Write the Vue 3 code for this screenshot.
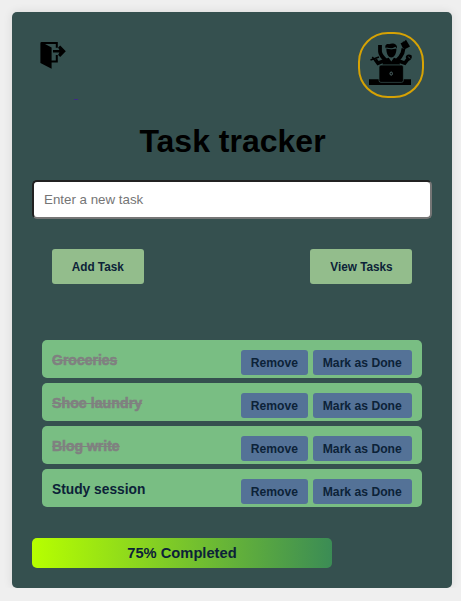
<script setup>
import { ref, computed } from 'vue'

const draft = ref('')
const tasks = ref([
  { name: 'Groceries', done: true, cls: 'groceries' },
  { name: 'Shoe laundry', done: true, cls: 'laundry' },
  { name: 'Blog write', done: true, cls: 'blog' },
  { name: 'Study session', done: false, cls: 'study' }
])
const percent = computed(() =>
  Math.round((tasks.value.filter(t => t.done).length / tasks.value.length) * 100)
)
</script>

<template>
  <main class="card">
    <header class="top">
      <a class="exit">
        <svg width="27" height="29" viewBox="0 0 27 29">
          <path d="M1.4 2.2Q1.4 1 2.6 1H18.8V6.8H16.8V3.1H6L12.6 6.6V19.4H16.8V14H18.8V21.6H12.6V27.8L1.4 22Z" />
          <path d="M14 9H20.4L19.1 6.4L21.2 4.4L26.8 10.2L21.2 16L19.1 14L20.4 11.4H14Z" />
        </svg>
        <i class="trace"></i>
      </a>
      <div class="logo">
        <svg width="62" height="62" viewBox="0 0 62 62">
          <path d="M9 45.2H19V48H43V45.2H51V51H9Z" />
          <rect x="19" y="31" width="24.4" height="17.4" rx="2" stroke="#35504f" stroke-width=".7" />
          <path d="M22.5 30.5C23 26 26.5 24.3 28.7 23.8L31.3 27.5L33.9 23.8C36.8 24.5 39.5 26 40 30.5Z" />
          <path d="M26.4 14.5C26.2 19 28 23.4 31.3 23.4S36.6 19 36.4 14.5C33 15.5 29 15.5 26.4 14.5Z" />
          <path d="M25.7 14.2C24.3 10.5 27.5 9.6 29 10.2C32.5 8.6 38 9.6 36.8 14.5L35.4 12.8C32 15 28.6 14.2 26.7 13.6Z" />
          <path d="M27.5 14.2Q32.5 15.8 35.5 13.5" fill="none" stroke="#35504f" stroke-width=".5" />
          <path d="M20 11V17.5Q20.3 21.5 26 26.5" fill="none" stroke="#000" stroke-width="3.8" />
          <path d="M43.5 14.5L42.5 19Q41 23 36.5 27" fill="none" stroke="#000" stroke-width="3.8" />
          <path d="M15.2 25.5L18 29.2L25.5 26.2M48 25L44.8 29.2L37.5 26.5" fill="none" stroke="#000" stroke-width="3.6" />
          <path d="M10.5 26L19 23M12.3 23L15 26.5" fill="none" stroke="#000" stroke-width="1.5" />
          <path d="M40.6 9.3L42.4 8.5L43 7.5L44.2 7.6L46 5.8L50 12.6L44.8 15.3L42.5 13.5Z" />
          <path d="M45.8 23.5C45.3 21.3 48.5 19.3 51.5 21.3C52.7 24.8 49.8 27.2 47.3 26.5Z" />
          <path d="M48.3 22.5L50 24.5" stroke="#35504f" />
          <ellipse cx="31.2" cy="39.6" rx="1.2" ry="1.6" fill="none" stroke="#526b6b" />
        </svg>
      </div>
    </header>

    <h1>Task tracker</h1>
    <input v-model="draft" class="entry" type="text" placeholder="Enter a new task" />

    <div class="actions">
      <button class="add"><span class="label">Add Task</span></button>
      <button class="view"><span class="label">View Tasks</span></button>
    </div>

    <ul class="list">
      <li v-for="task in tasks" :key="task.name">
        <span class="label name" :class="[{ done: task.done }, task.cls]">{{ task.name }}</span>
        <div class="tools">
          <button class="remove"><span class="label">Remove</span></button>
          <button class="mark"><span class="label">Mark as Done</span></button>
        </div>
      </li>
    </ul>

    <div class="bar" :style="{ width: percent + '%' }">
      <span class="label">{{ percent }}% Completed</span>
    </div>
  </main>
</template>

<style>
body {
  background: #efefef;
}
</style>

<style scoped>
.card {
  box-sizing: border-box;
  width: 440px;
  height: 576px;
  margin: 12px 0 0 12px;
  padding: 20px;
  border-radius: 5px;
  background: #35504f;
  box-shadow: 0 0 10px rgba(0, 0, 0, 0.1);
  font-family: "Liberation Sans", Arial, sans-serif;
  color: #0c2238;
  display: flow-root;
}
.top {
  display: flex;
  justify-content: space-between;
  height: 66px;
  padding: 0 8px 0 7px;
}
.exit {
  position: relative;
  padding-top: 9px;
}
.exit svg,
.logo svg {
  display: block;
}
.trace {
  position: absolute;
  left: 35px;
  top: 67px;
  width: 4px;
  height: 1px;
  background: #3d2b86;
}
.logo {
  box-sizing: border-box;
  width: 66px;
  height: 66px;
  border: 2px solid #d6a204;
  border-radius: 30px;
}
h1 {
  margin: 25px 0 20px;
  font-size: 32px;
  line-height: 37px;
  font-weight: 700;
  text-align: center;
  color: #000;
  padding-left: 1px;
}
.entry {
  display: block;
  box-sizing: border-box;
  width: 400px;
  height: 39px;
  padding: 10px;
  border: 2px inset #767676;
  border-radius: 5px;
  background: #fff;
  font: 13.333px "Liberation Sans", Arial, sans-serif;
}
.entry::placeholder {
  color: #757575;
}
.actions {
  display: flex;
  justify-content: space-between;
  padding: 30px 20px 56px;
}
button {
  display: flex;
  align-items: center;
  justify-content: center;
  padding: 0;
  border: 0;
  color: inherit;
  font: 700 13px "Liberation Sans", Arial, sans-serif;
  border-radius: 3px;
}
.label {
  display: block;
  flex: none;
  white-space: nowrap;
  transform: scaleX(0.905);
}
.actions button {
  height: 35px;
  background: #93bd8c;
}
.actions .add {
  width: 92px;
}
.actions .view {
  width: 102px;
}
.list {
  display: flex;
  flex-direction: column;
  gap: 5px;
  margin: 0;
  padding: 0 10px;
  list-style: none;
}
.list li {
  box-sizing: border-box;
  display: flex;
  justify-content: space-between;
  height: 38px;
  padding: 10px;
  border-radius: 5px;
  background: #79be83;
}
.name {
  height: 18px;
  font-size: 15.3px;
  font-weight: 700;
  line-height: 19px;
  transform: scaleX(0.915);
  transform-origin: left center;
}
.laundry {
  transform: scaleX(0.93);
}
.study {
  transform: scaleX(0.9);
}
.done {
  color: #808080;
  text-decoration: line-through;
  text-decoration-thickness: 1px;
  -webkit-text-stroke: 0.6px #808080;
}
.tools {
  display: flex;
  gap: 5px;
}
.tools button {
  height: 25px;
  background: #547297;
}
.tools .label {
  transform: scaleX(0.935);
}
.remove {
  width: 67px;
}
.mark {
  width: 99px;
}
.bar {
  display: flex;
  align-items: center;
  justify-content: center;
  height: 30px;
  margin-top: 31px;
  border-radius: 5px;
  background: linear-gradient(to right, #b7ff00, #3b8c55);
  font-size: 15.3px;
  font-weight: 700;
}
.bar .label {
  transform: scaleX(0.96);
}
</style>
